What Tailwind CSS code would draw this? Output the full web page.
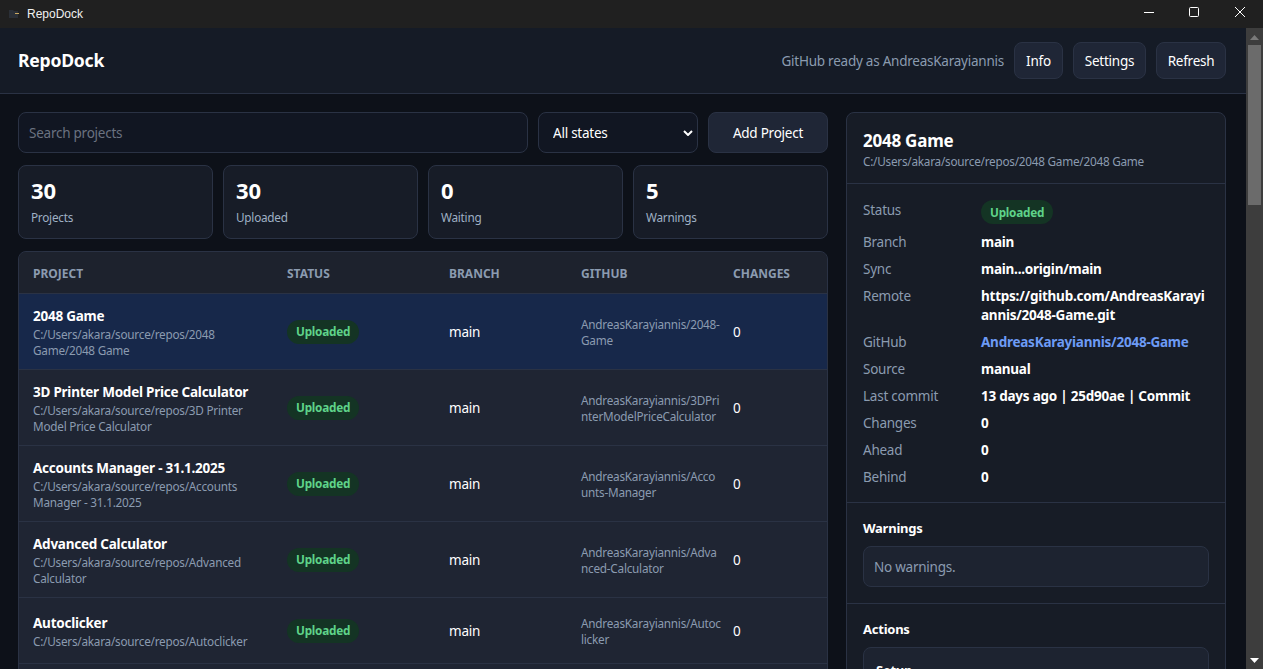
<!DOCTYPE html>
<html>
<head>
  <meta charset="UTF-8">
  <title>RepoDock</title>
  <script src="https://cdn.jsdelivr.net/npm/@tailwindcss/browser@4"></script>
</head>
<body class="h-[669px] overflow-hidden bg-[#0d1119] text-[13.5px] tracking-[-0.24px] text-white font-['Noto_Sans',sans-serif]">
  <!-- window title bar -->
  <div class="h-7 bg-[#202020] flex items-center pl-[9px] text-[12px] tracking-normal text-[#f0f0f0]">
    <svg class="w-[10px] h-[10px] mr-2" viewBox="0 0 10 10"><path d="M0 1h4l1 1h4v7H0z" fill="#2b3038"/><path d="M6 4h4v1H6z" fill="#c9a860"/></svg>
    <span class="font-['Liberation_Sans',sans-serif]">RepoDock</span>
    <div class="ml-auto flex items-center">
      <svg class="w-[46px] h-7" viewBox="0 0 46 28"><path d="M19 12.500h10" stroke="#fff"/></svg>
      <svg class="w-[46px] h-7" viewBox="0 0 46 28"><rect x="18.500" y="7.500" width="9" height="9" rx="1" fill="none" stroke="#fff"/></svg>
      <svg class="w-[46px] h-7" viewBox="0 0 46 28"><path d="M18 7l10 10M28 7L18 17" stroke="#fff" fill="none"/></svg>
    </div>
  </div>

  <div class="flex h-[641px]">
    <div class="w-[1246px] overflow-hidden">
      <header class="h-[66px] bg-[#151b26] border-b border-[#2a3244] pl-[18px] pr-5 flex items-center">
        <h1 class="text-[17.6px] font-bold">RepoDock</h1>
        <div class="ml-auto flex items-center gap-[10px]">
          <span class="pt-px text-[#8b9bb0]">GitHub ready as AndreasKarayiannis</span>
          <button class="w-[49px] h-[37px] pt-px rounded-lg bg-[#1f2636] border border-[#2a3244]">Info</button>
          <button class="w-[73px] h-[37px] pt-px rounded-lg bg-[#1f2636] border border-[#2a3244]">Settings</button>
          <button class="w-[70px] h-[37px] pt-px rounded-lg bg-[#1f2636] border border-[#2a3244]">Refresh</button>
        </div>
      </header>

      <main class="pl-[18px] pr-5 pt-[18px] flex gap-[18px] items-start">
        <section class="w-[810px] shrink-0">
          <div class="flex gap-[10px]">
            <input class="w-[510px] h-[41px] px-[10px] rounded-lg bg-[#111622] border border-[#2a3244] placeholder:text-[#6b7280]" placeholder="Search projects">
            <div class="relative w-[160px]">
              <select class="appearance-none w-full h-[41px] px-[14px] pt-px rounded-lg bg-[#111622] border border-[#2a3244]"><option>All states</option></select>
              <svg class="absolute right-[5px] top-[18px] w-[10px] h-[6px]" viewBox="0 0 10 6"><path d="M1 1l4 4 4-4" stroke="#fff" stroke-width="2" fill="none"/></svg>
            </div>
            <button class="w-[120px] h-[41px] pt-px rounded-lg bg-[#1f2636] border border-[#2a3244]">Add Project</button>
          </div>

          <div class="grid grid-cols-4 gap-[10px] mt-3">
            <div class="h-[74px] px-3 pb-1 rounded-lg bg-[#171c27] border border-[#2a3244] flex flex-col justify-center">
              <div class="text-[22px] leading-[28px] font-bold tracking-normal">30</div><div class="text-[11.75px] leading-4 mt-[5px] text-[#9fb0c4]">Projects</div>
            </div>
            <div class="h-[74px] px-3 pb-1 rounded-lg bg-[#171c27] border border-[#2a3244] flex flex-col justify-center">
              <div class="text-[22px] leading-[28px] font-bold tracking-normal">30</div><div class="text-[11.75px] leading-4 mt-[5px] text-[#9fb0c4]">Uploaded</div>
            </div>
            <div class="h-[74px] px-3 pb-1 rounded-lg bg-[#171c27] border border-[#2a3244] flex flex-col justify-center">
              <div class="text-[22px] leading-[28px] font-bold tracking-normal">0</div><div class="text-[11.75px] leading-4 mt-[5px] text-[#9fb0c4]">Waiting</div>
            </div>
            <div class="h-[74px] px-3 pb-1 rounded-lg bg-[#171c27] border border-[#2a3244] flex flex-col justify-center">
              <div class="text-[22px] leading-[28px] font-bold tracking-normal">5</div><div class="text-[11.75px] leading-4 mt-[5px] text-[#9fb0c4]">Warnings</div>
            </div>
          </div>

          <div class="mt-3 rounded-t-lg border border-[#2a3244] bg-[#1f2533] overflow-hidden">
            <div class="h-[42px] pt-[3px] border-b border-[#2a3244] bg-[#1d222d] grid grid-cols-[253px_162px_132px_152px_1fr] items-center text-[12px] tracking-normal font-bold text-[#8b9bb0]">
              <div class="pl-[14px]">PROJECT</div><div class="pl-[15px]">STATUS</div><div class="pl-[15px]">BRANCH</div><div class="pl-[15px]">GITHUB</div><div class="pl-[15px]">CHANGES</div>
            </div>
            <div id="rows"></div>
            <div class="h-10"></div>
          </div>
        </section>

        <aside class="w-[380px] shrink-0 h-[700px] rounded-t-lg border border-[#2a3244] bg-[#171c26]">
          <div class="h-[71px] border-b border-[#2a3244] px-4 pt-4">
            <h2 class="text-[17px] leading-[24px] font-bold">2048 Game</h2>
            <div class="text-[11.75px] leading-4 text-[#8b9bb0]">C:/Users/akara/source/repos/2048 Game/2048 Game</div>
          </div>
          <dl class="px-4 pt-4 pb-[15px] border-b border-[#2a3244] grid grid-cols-[118px_1fr] gap-y-2 leading-[19px]">
            <dt class="pt-px text-[#8b9bb0]">Status</dt><dd class="mb-px"><span class="inline-flex items-center h-6 px-[9px] rounded-full bg-[#143424] text-[#5fd38a] text-[11.75px] font-bold">Uploaded</span></dd>
            <dt class="text-[#8b9bb0]">Branch</dt><dd class="font-bold">main</dd>
            <dt class="text-[#8b9bb0]">Sync</dt><dd class="font-bold">main...origin/main</dd>
            <dt class="text-[#8b9bb0]">Remote</dt><dd class="font-bold">https://github.com/AndreasKarayi<br>annis/2048-Game.git</dd>
            <dt class="text-[#8b9bb0]">GitHub</dt><dd class="font-bold text-[#6d9bf5]">AndreasKarayiannis/2048-Game</dd>
            <dt class="text-[#8b9bb0]">Source</dt><dd class="font-bold">manual</dd>
            <dt class="text-[#8b9bb0]">Last commit</dt><dd class="font-bold">13 days ago | 25d90ae | Commit</dd>
            <dt class="text-[#8b9bb0]">Changes</dt><dd class="font-bold">0</dd>
            <dt class="text-[#8b9bb0]">Ahead</dt><dd class="font-bold">0</dd>
            <dt class="text-[#8b9bb0]">Behind</dt><dd class="font-bold">0</dd>
          </dl>
          <div class="h-[101px] px-4 pt-4 border-b border-[#2a3244]">
            <h3 class="text-[13px] leading-[19px] font-bold">Warnings</h3>
            <div class="mt-2 h-[41px] px-[10px] pt-px flex items-center rounded-lg bg-[#1d2330] border border-[#2a3244] text-[#8b9bb0]">No warnings.</div>
          </div>
          <div class="px-4 pt-4">
            <h3 class="text-[13px] leading-[19px] font-bold">Actions</h3>
            <div class="mt-2 h-24 px-3 pt-[13px] rounded-lg bg-[#1d2330] border border-[#2a3244] text-[13px] font-bold">Setup</div>
          </div>
        </aside>
      </main>
    </div>

    <!-- page scrollbar -->
    <div class="w-[17px] bg-[#3d3d3d] flex flex-col items-center relative">
      <svg class="w-[9px] h-[5px] mt-[7px]" viewBox="0 0 9 5"><path d="M4.500 0L9 5H0z" fill="#7a7a7a"/></svg>
      <div class="absolute top-[17px] left-[2px] w-[13px] h-[160px] bg-[#6b6b6b]"></div>
      <svg class="w-[9px] h-[5px] mt-auto mb-[6px]" viewBox="0 0 9 5"><path d="M0 0h9L4.500 5z" fill="#fff"/></svg>
    </div>
  </div>

  <script>
    const projects = [
      { name: "2048 Game", path: ["C:/Users/akara/source/repos/2048", "Game/2048 Game"], repo: ["AndreasKarayiannis/2048-", "Game"], selected: true },
      { name: "3D Printer Model Price Calculator", path: ["C:/Users/akara/source/repos/3D Printer", "Model Price Calculator"], repo: ["AndreasKarayiannis/3DPri", "nterModelPriceCalculator"] },
      { name: "Accounts Manager - 31.1.2025", path: ["C:/Users/akara/source/repos/Accounts", "Manager - 31.1.2025"], repo: ["AndreasKarayiannis/Acco", "unts-Manager"] },
      { name: "Advanced Calculator", path: ["C:/Users/akara/source/repos/Advanced", "Calculator"], repo: ["AndreasKarayiannis/Adva", "nced-Calculator"] },
      { name: "Autoclicker", path: ["C:/Users/akara/source/repos/Autoclicker"], repo: ["AndreasKarayiannis/Autoc", "licker"] }
    ];

    document.getElementById("rows").innerHTML = projects.map(p => `
      <div class="${p.selected ? "bg-[#17284a]" : "bg-[#1f2533]"} ${p.path.length > 1 ? "h-[76px]" : "h-[66px]"} border-b border-[#2a3244] grid grid-cols-[253px_162px_132px_152px_1fr] items-center">
        <div class="pl-[14px]">
          <div class="font-bold leading-5">${p.name}</div>
          <div class="text-[11.75px] leading-4 text-[#8b9bb0]">${p.path.join("<br>")}</div>
        </div>
        <div class="pl-[15px] pt-px"><span class="inline-flex items-center h-6 px-[9px] rounded-full bg-[#143424] text-[#5fd38a] text-[11.75px] font-bold">Uploaded</span></div>
        <div class="pl-[15px] pt-0.5">main</div>
        <div class="pl-[15px] text-[11.75px] leading-4 text-[#8b9bb0] whitespace-nowrap">${p.repo.join("<br>")}</div>
        <div class="pl-[15px] pt-0.5">0</div>
      </div>`).join("");
  </script>
</body>
</html>
